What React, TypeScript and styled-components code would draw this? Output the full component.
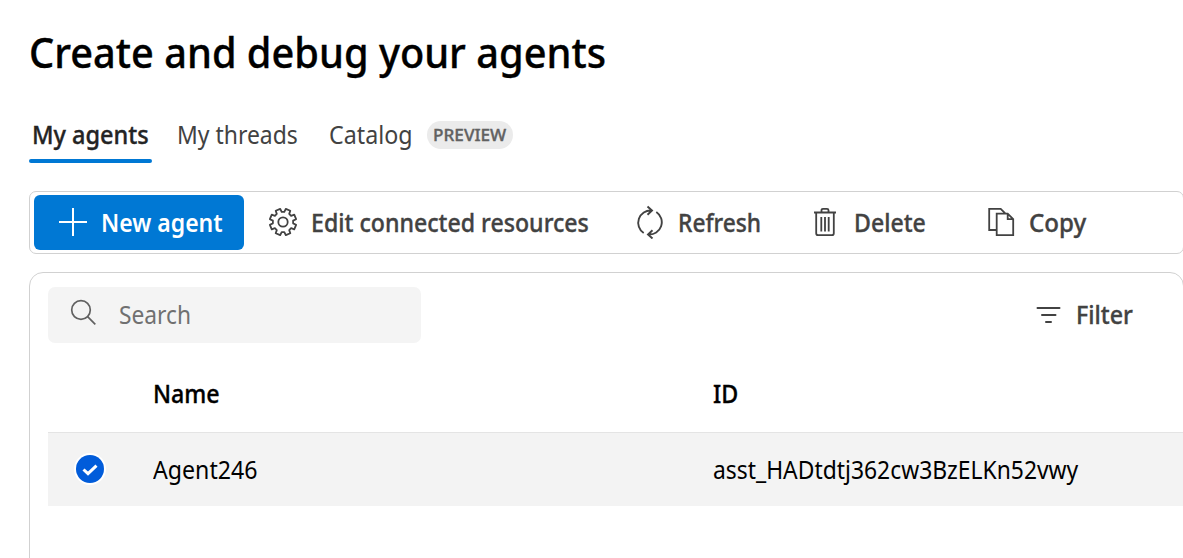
import React from 'react';
import styled, { createGlobalStyle } from 'styled-components';

const GlobalStyle = createGlobalStyle`
  * { box-sizing: border-box; }
  html, body { margin: 0; background: #fff; overflow: hidden; }
  body { font-family: 'Noto Sans', sans-serif; color: #000; }
  button { font: inherit; color: inherit; border: 0; background: none; padding: 0; }
`;

const Page = styled.main`
  display: flex;
  flex-direction: column;
  width: 1184px;
  height: 558px;
  padding-left: 29px;
  overflow: hidden;
`;

const Label = styled.span<{ $scale?: number; $weight?: number }>`
  display: inline-block;
  white-space: nowrap;
  font-weight: ${(p) => p.$weight ?? 400};
  -webkit-text-stroke: ${(p) => (p.$weight === 500 ? '0.35px currentColor' : '0')};
  transform: scaleX(${(p) => p.$scale ?? 0.93});
  transform-origin: 0 50%;
`;

const Title = styled.h1`
  margin: 24px 0 0;
  height: 56px;
  line-height: 56px;
  font-size: 41.5px;
  font-weight: 500;
`;

const Tabs = styled.nav`
  display: flex;
  height: 56px;
  margin-top: 27px;
  font-size: 25px;
  color: #424242;
`;

const Tab = styled.button<{ $active?: boolean; $width: number }>`
  display: flex;
  width: ${(p) => p.$width}px;
  height: 56px;
  padding-left: 3px;
  line-height: 55px;
  text-align: left;
  position: relative;
  color: ${(p) => (p.$active ? '#242424' : '#424242')};
  &::after {
    content: '';
    display: ${(p) => (p.$active ? 'block' : 'none')};
    position: absolute;
    left: 0;
    bottom: 0;
    width: 123px;
    height: 4px;
    border-radius: 2px;
    background: #0078d4;
  }
`;

const Badge = styled.span`
  width: 86px;
  height: 28px;
  margin-top: 14px;
  padding-left: 6px;
  border-radius: 14px;
  background: #ebebeb;
  color: #616161;
  font-size: 17px;
  line-height: 27px;
`;

const Toolbar = styled.div`
  display: flex;
  align-items: center;
  flex: none;
  height: 63px;
  margin-top: 28px;
  padding-left: 4px;
  border: 1px solid #d1d1d1;
  border-radius: 7px;
  font-size: 25px;
  color: #424242;
`;

const ToolButton = styled.button<{ $width: number; $gap: number; $primary?: boolean }>`
  display: flex;
  align-items: center;
  flex: none;
  gap: ${(p) => p.$gap}px;
  width: ${(p) => p.$width}px;
  height: 55px;
  padding-left: ${(p) => (p.$primary ? 24 : 0)}px;
  border-radius: 6px;
  background: ${(p) => (p.$primary ? '#0078d4' : 'transparent')};
  color: ${(p) => (p.$primary ? '#fff' : '#424242')};
  margin-right: ${(p) => (p.$primary ? 24 : 0)}px;
  ${Label} { margin-bottom: 2px; }
  svg { margin-bottom: 1px; }
`;

const Icon = styled.svg`
  display: block;
  flex: none;
  fill: none;
  stroke: currentColor;
`;

const Panel = styled.section`
  flex: none;
  height: 320px;
  margin-top: 18px;
  padding: 14px 0 0 18px;
  border: 1px solid #d1d1d1;
  border-radius: 14px;
`;

const PanelHeader = styled.div`
  display: flex;
  justify-content: space-between;
  height: 56px;
  font-size: 25px;
  ${Label} { margin-bottom: 2px; }
`;

const SearchBox = styled.div`
  display: flex;
  align-items: center;
  gap: 22px;
  width: 373px;
  height: 56px;
  padding-left: 22px;
  border-radius: 7px;
  background: #f4f4f4;
  color: #707070;
  svg { margin-bottom: 5px; color: #616161; }
`;

const FilterButton = styled.button`
  display: flex;
  align-items: center;
  gap: 15px;
  width: 147px;
  color: #424242;
`;

const Row = styled.div<{ $selected?: boolean }>`
  display: grid;
  grid-template-columns: 105px 560px 1fr;
  align-items: center;
  height: ${(p) => (p.$selected ? 74 : 89)}px;
  padding-top: ${(p) => (p.$selected ? 1 : 13)}px;
  font-size: 25px;
  background: ${(p) => (p.$selected ? '#f3f3f3' : '#fff')};
  border-top: ${(p) => (p.$selected ? '1px solid #e4e4e4' : '0')};
  ${Label} { margin-bottom: 2px; }
`;

const Selected = styled.span`
  display: block;
  width: 32px;
  height: 32px;
  margin-left: 26px;
  margin-bottom: 3px;
`;

// Builds an eight-toothed gear outline around the origin.
const gearPath = () => {
  const pts: string[] = [];
  const profile: [number, number][] = [[-15, 10.2], [-10.5, 13.4], [10.5, 13.4], [15, 10.2]];
  for (let i = 0; i < 8; i++) {
    profile.forEach(([offset, r]) => {
      const a = ((22.5 + i * 45 + offset) * Math.PI) / 180;
      pts.push(`${(r * Math.cos(a)).toFixed(2)} ${(r * Math.sin(a)).toFixed(2)}`);
    });
  }
  return `M${pts.join('L')}Z`;
};

const PlusIcon = () => (
  <Icon width="30" height="30" viewBox="0 0 30 30" strokeWidth="2">
    <path d="M15 1v28M1 15h28" />
  </Icon>
);

const GearIcon = () => (
  <Icon width="30" height="30" viewBox="-15 -15 30 30" strokeWidth="1.8" strokeLinejoin="round">
    <path d={gearPath()} />
    <circle r="4.7" />
  </Icon>
);

const RefreshIcon = () => (
  <Icon width="28" height="34" viewBox="0 -0.5 28 34" strokeWidth="1.9">
    <path d="M7.7 27.500A12.3 12.3 0 0 1 15.5 5M11.5 1l4.5 4-4.5 4.2" />
    <path d="M20.3 6.5A12.3 12.3 0 0 1 12.5 29M16.5 33l-4.5-4 4.5-4.2" />
  </Icon>
);

const TrashIcon = () => (
  <Icon width="24" height="30" viewBox="0 0 24 30" strokeWidth="1.8">
    <path d="M1 5.5h22M8.5 5V3.3q0-1.500 1.500-1.500h4q1.500 0 1.500 1.500V5M3.2 5.5v20.7q0 2 2 2h13.6q2 0 2-2V5.5M8.3 10v14.5M12 10v14.5M15.7 10v14.5" />
  </Icon>
);

const CopyIcon = () => (
  <Icon width="28" height="30" viewBox="-0.7 0 28 30" strokeWidth="1.8">
    <path d="M9 23H1.5V1.8H13l4.800 4.800M9 6.7h11l5.500 5.500v15.900H9ZM20 6.7v5.5h5.5" />
  </Icon>
);

const SearchIcon = () => (
  <Icon width="27" height="27" viewBox="0 0 27 27" strokeWidth="1.7">
    <circle cx="11" cy="11" r="9.3" />
    <path d="M17.6 17.6l7.7 7.7" />
  </Icon>
);

const FilterIcon = () => (
  <Icon width="25" height="18" viewBox="0 0 25 18" strokeWidth="2" strokeLinecap="round">
    <path d="M1.5 2h22M6 9h13.5M10 16h5" />
  </Icon>
);

const CheckIcon = () => (
  <Icon width="32" height="32" viewBox="0 0 32 32">
    <circle cx="16" cy="16" r="16" fill="#fff" stroke="none" />
    <circle cx="16" cy="16" r="14" fill="#015cda" stroke="none" />
    <path d="M9.5 16.5l4.500 4.200 8.500-8" stroke="#fff" strokeWidth="3" />
  </Icon>
);

export default function App() {
  return (
    <>
      <GlobalStyle />
      <Page>
        <Title>
          <Label $weight={500} $scale={0.958}>Create and debug your agents</Label>
        </Title>
        <Tabs>
          <Tab $active $width={145}><Label $weight={500} $scale={0.94}>My agents</Label></Tab>
          <Tab $width={152}><Label $scale={0.917}>My threads</Label></Tab>
          <Tab $width={101}><Label $scale={0.93}>Catalog</Label></Tab>
          <Badge><Label $weight={500} $scale={1.01}>PREVIEW</Label></Badge>
        </Tabs>
        <Toolbar>
          <ToolButton $primary $width={210} $gap={13}>
            <PlusIcon /><Label $weight={600} $scale={0.92}>New agent</Label>
          </ToolButton>
          <ToolButton $width={368} $gap={13}>
            <GearIcon /><Label $weight={500} $scale={0.926}>Edit connected resources</Label>
          </ToolButton>
          <ToolButton $width={177} $gap={14}>
            <RefreshIcon /><Label $weight={500} $scale={0.91}>Refresh</Label>
          </ToolButton>
          <ToolButton $width={174} $gap={17}>
            <TrashIcon /><Label $weight={500} $scale={0.925}>Delete</Label>
          </ToolButton>
          <ToolButton $width={110} $gap={14}>
            <CopyIcon /><Label $weight={500} $scale={0.965}>Copy</Label>
          </ToolButton>
        </Toolbar>
        <Panel>
          <PanelHeader>
            <SearchBox><SearchIcon /><Label $scale={0.91}>Search</Label></SearchBox>
            <FilterButton><FilterIcon /><Label $weight={500} $scale={0.93}>Filter</Label></FilterButton>
          </PanelHeader>
          <Row>
            <span />
            <Label $weight={500} $scale={0.93}>Name</Label>
            <Label $weight={500} $scale={0.93}>ID</Label>
          </Row>
          <Row $selected>
            <Selected><CheckIcon /></Selected>
            <Label $scale={0.926}>Agent246</Label>
            <Label $scale={0.915}>asst_HADtdtj362cw3BzELKn52vwy</Label>
          </Row>
        </Panel>
      </Page>
    </>
  );
}
